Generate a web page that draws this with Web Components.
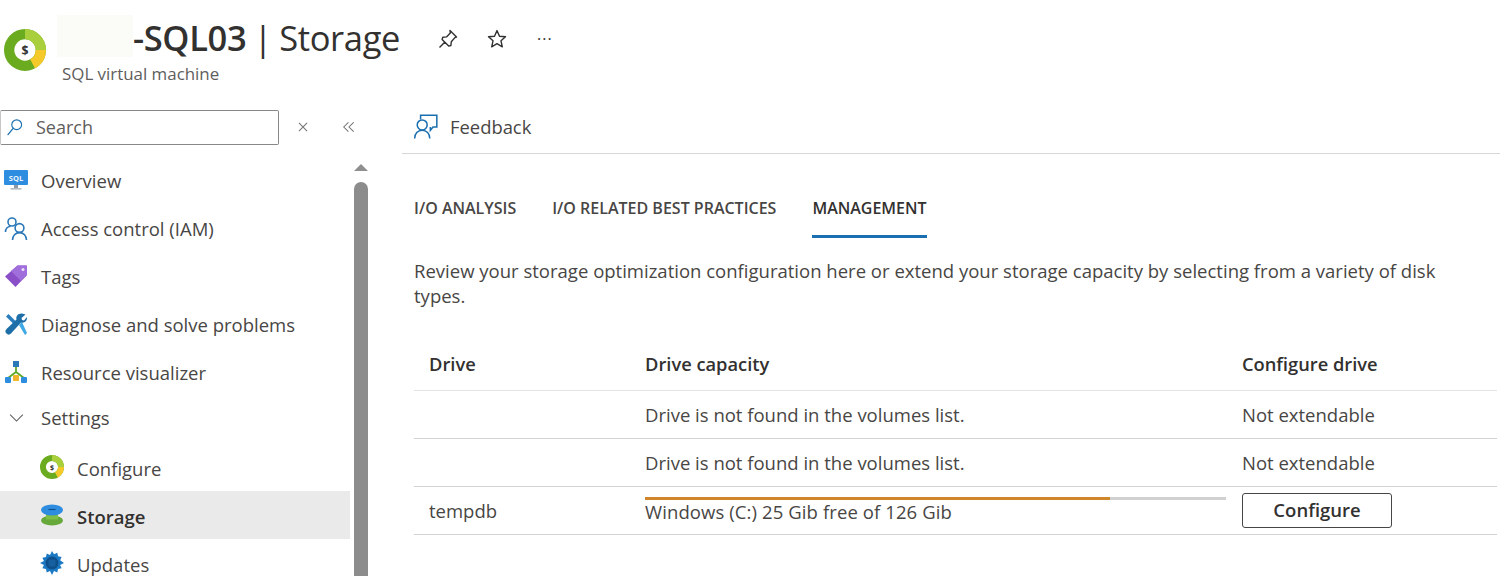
<!DOCTYPE html>
<html lang="en">
<head>
<meta charset="utf-8">
<title>SQL03 | Storage</title>
<style>
html, body { margin: 0; height: 576px; overflow: hidden; background: #fff; }
body { font-family: "Open Sans", "Liberation Sans", sans-serif; color: #323130; }
</style>
</head>
<body>
<storage-blade></storage-blade>

<template id="blade_template">
<style>
:host { display: block; width: 1500px; height: 576px; overflow: hidden; }
.body { display: grid; grid-template-columns: 402px 1fr; }
</style>
<blade-header></blade-header>
<div class="body">
  <side-menu>
    <nav-item icon="sql">Overview</nav-item>
    <nav-item icon="iam">Access control (IAM)</nav-item>
    <nav-item icon="tag">Tags</nav-item>
    <nav-item icon="tools">Diagnose and solve problems</nav-item>
    <nav-item icon="tree">Resource visualizer</nav-item>
    <nav-item icon="chevron" group>Settings</nav-item>
    <nav-item icon="donut" sub>Configure</nav-item>
    <nav-item icon="disk" sub selected>Storage</nav-item>
    <nav-item icon="gear" sub>Updates</nav-item>
  </side-menu>
  <main-pane></main-pane>
</div>
</template>

<template id="header_template">
<style>
:host { display: flex; height: 96px; box-sizing: border-box; padding: 15px 0 0 4px; gap: 11px; }
.logo { margin-top: 14px; }
.titles { display: flex; flex-direction: column; }
.row { display: flex; align-items: center; height: 42px; }
.blank { width: 76px; height: 42px; background: #fbfbf8; }
h1 { margin: 2px 0 -2px; font-size: 34.500px; font-weight: 400; line-height: 42px; letter-spacing: -.35px; word-spacing: -1.500px; white-space: nowrap; }
b { font-weight: 600; }
.actions { display: flex; align-items: center; gap: 25px; margin: 3px 0 -3px 36px; }
.sub { font-size: 16.900px; line-height: 20px; margin: 7px 0 0 5px; color: #605e5c; }
.more { font-size: 16px; line-height: 16px; margin: -1px 0 0 3px; letter-spacing: 1px; }
</style>
<az-icon class="logo" name="donut" size="42"></az-icon>
<div class="titles">
  <div class="row">
    <div class="blank"></div>
    <h1><b>-SQL03</b> | Storage</h1>
    <div class="actions">
      <az-icon name="pin" size="24"></az-icon>
      <az-icon name="star" size="24"></az-icon>
      <span class="more">···</span>
    </div>
  </div>
  <div class="sub">SQL virtual machine</div>
</div>
</template>

<template id="menu_template">
<style>
:host { display: block; padding-top: 14px; }
.search-row { display: flex; align-items: center; height: 34px; }
.search { box-sizing: border-box; width: 279px; height: 35px; border: 1px solid #8a8886; border-left-color: #c8c6c4; border-radius: 2px; display: flex; align-items: center; gap: 11px; padding-left: 5px; font-size: 18px; color: #605e5c; }
.search-row az-icon.x { margin-left: 17px; }
.search-row az-icon.collapse { margin-left: 32px; }
.list-wrap { display: flex; gap: 4px; margin-top: 13px; }
.list { width: 350px; flex: none; }
.bar { width: 14px; flex: none; display: flex; flex-direction: column; align-items: center; }
.arrow { width: 0; height: 0; margin-top: 7px; border: 7px solid transparent; border-top: 0; border-bottom-color: #8f8f8f; }
.thumb { width: 14px; height: 500px; margin-top: 11px; background: #8c8c8c; border-radius: 7px 7px 0 0; }
</style>
<div class="search-row">
  <label class="search"><az-icon name="search" size="19"></az-icon>Search</label>
  <az-icon class="x" name="close" size="14"></az-icon>
  <az-icon class="collapse" name="collapse" size="14"></az-icon>
</div>
<div class="list-wrap">
  <div class="list"><slot></slot></div>
  <div class="bar"><div class="arrow"></div><div class="thumb"></div></div>
</div>
</template>

<template id="item_template">
<style>
:host { display: flex; align-items: center; box-sizing: border-box; height: 48px; gap: 13px; padding: 0 0 2px 4px; font-size: 18.500px; color: #484644; white-space: nowrap; }
:host([group]) { height: 46px; padding: 0 0 6px 8px; gap: 16px; }
:host([sub]) { padding: 3px 0 0 40px; }
:host([selected]) { background: #ebeaea; color: #323130; font-weight: 600; }
:host([sub]) az-icon { margin-top: -3px; }
</style>
<az-icon></az-icon><span><slot></slot></span>
</template>

<template id="main_template">
<style>
:host { display: block; }
.toolbar { display: flex; align-items: center; gap: 11px; height: 44px; padding-bottom: 5px; margin-top: 8px; padding-left: 11px; border-bottom: 1px solid #d6d6d6; font-size: 18.400px; color: #484644; }
.content { padding: 0 3px 0 12px; }
p { margin: 20px 0 0; font-size: 18.530px; line-height: 25px; color: #484644; width: 1040px; }
</style>
<div class="toolbar"><az-icon name="feedback" size="26"></az-icon>Feedback</div>
<div class="content">
  <tab-bar></tab-bar>
  <p>Review your storage optimization configuration here or extend your storage capacity by selecting from a variety of disk types.</p>
  <drive-table></drive-table>
</div>
</template>

<template id="tabs_template">
<style>
:host { display: flex; gap: 36px; margin-top: 30px; font-size: 16px; font-weight: 600; color: #484644; white-space: nowrap; }
span { display: block; height: 54px; line-height: 48px; box-sizing: border-box; }
.on { border-bottom: 3px solid #1a6fb0; color: #323130; }
</style>
<span>I/O ANALYSIS</span><span>I/O RELATED BEST PRACTICES</span><span class="on">MANAGEMENT</span>
</template>

<template id="table_template">
<style>
:host { display: block; margin-top: 36px; font-size: 18.500px; color: #484644; }
.row { display: grid; grid-template-columns: 216px 597px 1fr; height: 47px; border-bottom: 1px solid #d2d2d2; align-items: center; padding-left: 15px; }
.head { height: 38px; padding-bottom: 8px; border-bottom-color: #e4e4e4; font-weight: 600; color: #323130; font-size: 18.300px; }
.cap { position: relative; align-self: stretch; display: flex; align-items: center; padding-top: 1px; margin-right: 16px; letter-spacing: .1px; }
.track { position: absolute; left: 0; right: 0; top: 10px; height: 3px; background: #d0d0d0; }
.fill { width: 80%; height: 100%; background: #d0872b; }
button { font: inherit; font-weight: 600; color: #323130; display: block; width: 150px; height: 35px; padding: 0 0 2px; background: #fff; border: 1px solid #484644; border-radius: 3px; }
</style>
<div class="row head"><span>Drive</span><span>Drive capacity</span><span>Configure drive</span></div>
<div class="row"><span></span><span>Drive is not found in the volumes list.</span><span>Not extendable</span></div>
<div class="row"><span></span><span>Drive is not found in the volumes list.</span><span>Not extendable</span></div>
<div class="row"><span>tempdb</span><div class="cap"><div class="track"><div class="fill"></div></div>Windows (C:) 25 Gib free of 126 Gib</div><span><button>Configure</button></span></div>
</template>

<script>
const icons = {
    donut: `<circle cx="12" cy="12" r="9.050" fill="none" stroke="#6aab20" stroke-width="5.900"/>
      <circle cx="12" cy="12" r="9.050" fill="none" stroke="#a9cf3c" stroke-width="5.900" pathLength="100" stroke-dasharray="25 75" transform="rotate(-90 12 12)"/>
      <circle cx="12" cy="12" r="9.050" fill="none" stroke="#f5c92a" stroke-width="5.900" pathLength="100" stroke-dasharray="17 83"/>
      <text x="12" y="14.600" text-anchor="middle" font-family="Open Sans, sans-serif" font-size="7" font-weight="700" fill="#333">$</text>`,
    pin: `<path d="M14 3.500l6.500 6.500-1.600.6-3.600 4.200-.4 3.700-2.200.6-6.600-6.600.7-2.200 3.700-.4 3.800-3.900zM8.700 15.300L3.500 20.500" fill="none" stroke="#323130" stroke-width="1.400" stroke-linejoin="round"/>`,
    star: `<path d="M12 3.600l2.500 5.600 6 .6-4.500 4 1.300 6-5.300-3.100-5.300 3.100 1.300-6-4.500-4 6-.6z" fill="none" stroke="#323130" stroke-width="1.400" stroke-linejoin="round"/>`,
    search: `<circle cx="13.500" cy="8.500" r="6.200" fill="none" stroke="#1a6fb0" stroke-width="1.400"/><path d="M9 13L2.500 21" stroke="#1a6fb0" stroke-width="1.600" stroke-linecap="round"/>`,
    close: `<path d="M5 5l14 14M19 5L5 19" stroke="#757575" stroke-width="1.800"/>`,
    collapse: `<path d="M11 4l-8 8 8 8M20 4l-8 8 8 8" fill="none" stroke="#757575" stroke-width="1.800"/>`,
    chevron: `<path d="M3 8l9 9 9-9" fill="none" stroke="#605e5c" stroke-width="1.500"/>`,
    feedback: `<path d="M7 6V2h15v11h-3.500l-2.500 3v-3" fill="none" stroke="#1a6fb0" stroke-width="1.400"/>
      <circle cx="8.500" cy="11" r="4.600" fill="#fff" stroke="#1a6fb0" stroke-width="1.400"/>
      <path d="M1.500 23.500c0-4.500 3-7.600 7-7.600s7 3.100 7 7.600" fill="none" stroke="#1a6fb0" stroke-width="1.400"/>`,
    sql: `<path d="M10 17h4v3h-4z" fill="#8f9aa5"/><path d="M6.500 20h11v1.600h-11z" fill="#b3bac1"/><rect x="0" y="2" width="24" height="15" rx="1" fill="#2f8de0"/><text x="12" y="12.600" text-anchor="middle" font-family="Open Sans, sans-serif" font-size="7.500" font-weight="700" fill="#e8f3ff">SQL</text>`,
    iam: `<g fill="none" stroke="#2b78b8" stroke-width="1.600"><circle cx="8" cy="6" r="4"/><path d="M1.500 16c0-3 2-5.500 5-5.800"/><circle cx="15.500" cy="12" r="4.400" fill="#fff"/><path d="M8.500 24c0-4 3-7.400 7-7.400s7 3.400 7 7.400"/></g>`,
    tag: `<path d="M13.500 1.500h8.500a1 1 0 0 1 1 1v8.500L11.500 23 1 12.500z" fill="#8a4fc7"/><path d="M13.500 1.500h8.500a1 1 0 0 1 1 1v8.500L17 17 7 7z" fill="#a06fdb"/><circle cx="19" cy="5.500" r="1.500" fill="#ece0f8"/>`,
    tools: `<path d="M2 4.500L4.500 2l9 9-2.500 2.500z" fill="#2a7dbd"/><path d="M15 13l3-3 5 11-2 2z" fill="#3fa9e6"/><path d="M21.500 2.500l-4 3.500.5 2 2 .5 3-3.500c.5 3.500-2.500 6.500-6 5.500L7 21.500a3 3 0 0 1-4.500-4.500l10-9.500c-1-3.500 2-6.500 5.500-6z" fill="#1e6fa8"/>`,
    tree: `<rect x="9" y="1" width="6" height="6" fill="#2b78b8"/><path d="M12 7v6M12 12L4 18M12 12l8 6" stroke="#5ea92a" stroke-width="1.800" fill="none"/><rect x="1" y="17" width="6" height="6" rx="1" fill="#2f8de0"/><rect x="9" y="15" width="6" height="6" rx="1" fill="#f0b429"/><rect x="17" y="17" width="6" height="6" rx="1" fill="#2f8de0"/>`,
    disk: `<ellipse cx="12" cy="17.500" rx="11" ry="5" fill="#66a83a"/><path d="M6 10.500h12v6H6z" fill="#7fbf45"/><ellipse cx="12" cy="7" rx="11" ry="5.500" fill="#2f8de0"/><path d="M8.500 6.500h7" stroke="#0f4f8a" stroke-width="1.200"/>`,
    gear: `<path d="M12 0l2 3.200 3.300-1.500.7 3.600 3.600.7-1.500 3.300L24 12l-3.900 2 1.500 3.300-3.600.7-.7 3.600-3.300-1.500L12 24l-2-3.900-3.300 1.500-.7-3.600-3.600-.7L3.900 14 0 12l3.900-2L2.400 6.700 6 6l.7-3.600L10 3.900z" fill="#1b79c4"/><circle cx="12" cy="12" r="6.500" fill="#0f4f8a"/><rect x="8.500" y="8.500" width="7" height="7" rx="1" fill="#17609f"/>`
};

class AzIcon extends HTMLElement {
    static get observedAttributes() { return ['name', 'size']; }

    connectedCallback() {
        this.render();
    }

    attributeChangedCallback() {
        this.render();
    }

    render() {
        let size = this.getAttribute('size') || 24;
        this.shadowRoot || this.attachShadow({ mode: 'open' });
        this.shadowRoot.innerHTML = `<style>:host { display: inline-flex; flex: none; width: ${size}px; height: ${size}px; } svg { display: block; width: 100%; height: 100%; }</style>
            <svg viewBox="0 0 24 24" aria-hidden="true">${icons[this.getAttribute('name')] || ''}</svg>`;
    }
}
window.customElements.define('az-icon', AzIcon);

// every other element is just its template stamped into an open shadow root
function define_from_template(tag, template_id, setup) {
    window.customElements.define(tag, class extends HTMLElement {
        constructor() {
            super();
            this.attachShadow({ mode: 'open' });
            this.shadowRoot.appendChild(document.getElementById(template_id).content.cloneNode(true));
        }

        connectedCallback() {
            if (setup) setup(this);
        }
    });
}

define_from_template('blade-header', 'header_template');
define_from_template('side-menu', 'menu_template');
define_from_template('nav-item', 'item_template', (el) => {
    let icon = el.shadowRoot.querySelector('az-icon');
    icon.setAttribute('name', el.getAttribute('icon'));
    icon.setAttribute('size', el.hasAttribute('group') ? 17 : 24);
});
define_from_template('tab-bar', 'tabs_template');
define_from_template('drive-table', 'table_template');
define_from_template('main-pane', 'main_template');
define_from_template('storage-blade', 'blade_template');
</script>
</body>
</html>
